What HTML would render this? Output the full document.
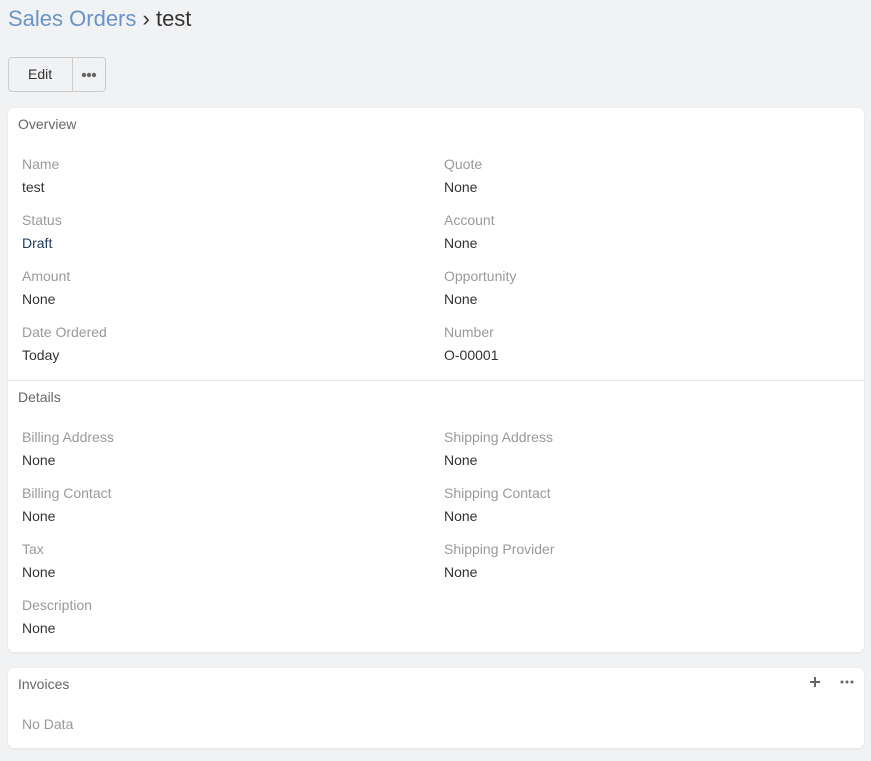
<!DOCTYPE html><html><head><style>
body{margin:0;background:#f1f2f4;width:871px;height:761px;position:relative;font-family:"Liberation Sans",sans-serif;font-size:14px;color:#333;overflow:hidden}
.a{position:absolute;white-space:nowrap}
.t{position:absolute;top:4px;left:8px;font-size:22px;line-height:30px}
.panel{position:absolute;left:8px;width:856px;background:#fff;border-radius:6px;box-shadow:0 1px 2px rgba(0,0,0,.08)}
.l{color:#999;font-size:14px}
.v{color:#333;font-size:14px}
.h{color:#666;font-size:14px}
</style></head><body>
<div class="t"><span style="color:#6b93c7">Sales Orders</span> <span style="color:#333">› test</span></div>
<div class="a" style="left:8px;top:57px;width:96px;height:33px;border:1px solid #ccc;border-radius:4px;background:#f1f2f4"></div>
<div class="a" style="left:72px;top:58px;width:1px;height:33px;background:#ccc"></div>
<div class="a" style="left:28px;top:66px;color:#333">Edit</div>
<svg class="a" style="left:81px;top:72px" width="16" height="6"><circle cx="3" cy="3" r="2.2" fill="#666"/><circle cx="8" cy="3" r="2.2" fill="#666"/><circle cx="13" cy="3" r="2.2" fill="#666"/></svg>
<div class="panel" style="top:108px;height:544px"></div>
<div class="a" style="left:8px;top:380px;width:856px;height:1px;background:#e8e8e8"></div>
<div class="a h" style="left:18px;top:116px">Overview</div>
<div class="a h" style="left:18px;top:389px">Details</div>
<div class="a l" style="left:22px;top:156px">Name</div><div class="a v" style="left:22px;top:179px">test</div>
<div class="a l" style="left:22px;top:212px">Status</div><div class="a v" style="left:22px;top:235px;color:#1f3a5f">Draft</div>
<div class="a l" style="left:22px;top:268px">Amount</div><div class="a v" style="left:22px;top:291px">None</div>
<div class="a l" style="left:22px;top:324px">Date Ordered</div><div class="a v" style="left:22px;top:347px">Today</div>
<div class="a l" style="left:444px;top:156px">Quote</div><div class="a v" style="left:444px;top:179px">None</div>
<div class="a l" style="left:444px;top:212px">Account</div><div class="a v" style="left:444px;top:235px">None</div>
<div class="a l" style="left:444px;top:268px">Opportunity</div><div class="a v" style="left:444px;top:291px">None</div>
<div class="a l" style="left:444px;top:324px">Number</div><div class="a v" style="left:444px;top:347px">O-00001</div>
<div class="a l" style="left:22px;top:429px">Billing Address</div><div class="a v" style="left:22px;top:452px">None</div>
<div class="a l" style="left:22px;top:485px">Billing Contact</div><div class="a v" style="left:22px;top:508px">None</div>
<div class="a l" style="left:22px;top:541px">Tax</div><div class="a v" style="left:22px;top:564px">None</div>
<div class="a l" style="left:22px;top:597px">Description</div><div class="a v" style="left:22px;top:620px">None</div>
<div class="a l" style="left:444px;top:429px">Shipping Address</div><div class="a v" style="left:444px;top:452px">None</div>
<div class="a l" style="left:444px;top:485px">Shipping Contact</div><div class="a v" style="left:444px;top:508px">None</div>
<div class="a l" style="left:444px;top:541px">Shipping Provider</div><div class="a v" style="left:444px;top:564px">None</div>
<div class="panel" style="top:668px;height:80px"></div>
<div class="a h" style="left:18px;top:676px">Invoices</div>
<div class="a l" style="left:22px;top:716px">No Data</div>
<svg class="a" style="left:809px;top:676px" width="12" height="12"><path d="M6 1V11M1 6H11" stroke="#666" stroke-width="2"/></svg>
<svg class="a" style="left:840px;top:680px" width="14" height="4"><circle cx="2" cy="2" r="1.5" fill="#666"/><circle cx="7" cy="2" r="1.5" fill="#666"/><circle cx="12" cy="2" r="1.5" fill="#666"/></svg>
</body></html>
